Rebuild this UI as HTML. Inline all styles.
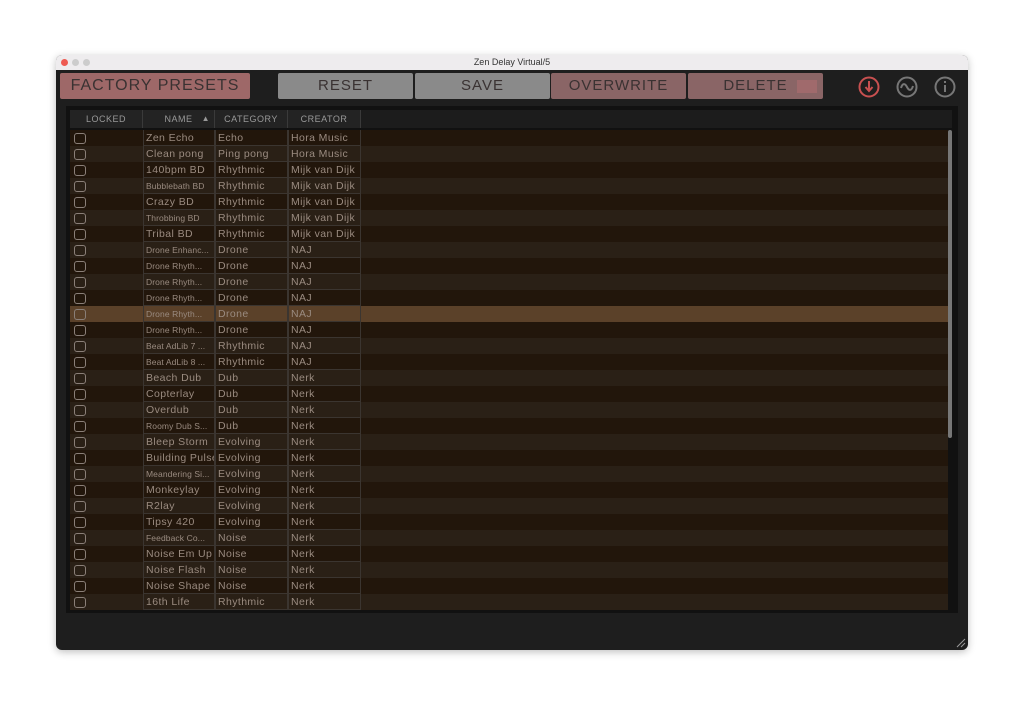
<!DOCTYPE html><html><head><style>
body{margin:0;width:1024px;height:706px;background:#fff;position:relative;overflow:hidden;font-family:"Liberation Sans",sans-serif}
.win{position:absolute;left:56px;top:55px;width:912px;height:595px;border-radius:6px;background:#1e1e1e;overflow:hidden;box-shadow:0 2px 8px rgba(0,0,0,.25)}
.tb{position:absolute;left:0;top:0;width:912px;height:15px;background:#eeecee;font-size:9px;color:#333;text-align:center;line-height:15px}
.dot{position:absolute;top:4px;width:7px;height:7px;border-radius:50%;background:#ccc}
.btn{position:absolute;top:18px;height:26px;line-height:26px;text-align:center;font-size:15px;letter-spacing:1px;color:#3a3232;border-radius:2px}
.panel{position:absolute;left:10px;top:51px;width:892px;height:507px;background:#111}
.hdr{position:absolute;top:4px;height:18px;line-height:18px;font-size:9px;color:#999;text-align:center;background:#232323;border-right:1px solid #3a3a3a;letter-spacing:.5px}
.row{position:absolute;left:4px;width:878px;height:16px}
.c{position:absolute;top:0;height:16px;line-height:16px;font-size:10.5px;color:#9a8b80;border:1px solid #3b3530;border-top:none;padding-left:2px;letter-spacing:.4px;white-space:nowrap;overflow:hidden;box-sizing:border-box}
.cb{position:absolute;left:4px;top:3px;width:10px;height:9px;border:1px solid #8a7f78;border-radius:3px}
</style></head><body>
<div class="win">
<div class="tb">Zen Delay Virtual/5</div>
<div class="dot" style="left:5px;background:#ee5a52"></div><div class="dot" style="left:16px"></div><div class="dot" style="left:27px"></div>
<div class="btn" style="left:4px;width:190px;background:#9e6868;font-size:16px">FACTORY PRESETS</div>
<div class="btn" style="left:222px;width:135px;background:#8a8a8a">RESET</div>
<div class="btn" style="left:359px;width:135px;background:#8a8a8a">SAVE</div>
<div class="btn" style="left:495px;width:135px;background:#8a6566">OVERWRITE</div>
<div class="btn" style="left:632px;width:135px;background:#8a6566">DELETE<span style="position:absolute;right:6px;top:7px;width:20px;height:13px;background:#a06a6c"></span></div>
<svg style="position:absolute;left:800px;top:20px" width="112" height="24" viewBox="0 0 112 24">
<circle cx="13" cy="12" r="9.5" fill="none" stroke="#c85050" stroke-width="2"/><path d="M13 6v9M9.5 12l3.5 4 3.5-4" stroke="#c85050" stroke-width="2" fill="none"/>
<circle cx="51" cy="12" r="9.5" fill="none" stroke="#777" stroke-width="2"/><path d="M45 13c1.5-5 4-5 6-1s4.5 4 6-1" stroke="#777" stroke-width="2" fill="none"/>
<circle cx="89" cy="12" r="9.5" fill="none" stroke="#777" stroke-width="2"/><path d="M89 10v7M89 6v2" stroke="#777" stroke-width="2"/>
</svg>
<div class="panel">
<div style="position:absolute;left:4px;top:4px;width:882px;height:18px;background:#1c1c1c"></div>
<div class="hdr" style="left:4px;width:72px">LOCKED</div>
<div class="hdr" style="left:77px;width:71px">NAME<span style="position:absolute;right:4px;font-size:8px">▲</span></div>
<div class="hdr" style="left:149px;width:72px">CATEGORY</div>
<div class="hdr" style="left:222px;width:72px">CREATOR</div>
<div id="rows"></div>
<div style="position:absolute;left:882px;top:24px;width:4px;height:308px;background:#777;border-radius:2px"></div>
</div>
<svg style="position:absolute;right:2px;bottom:2px" width="10" height="10"><path d="M1 9L9 1M5 9L9 5" stroke="#999"/></svg>
</div>
<script>
var d=[["Zen Echo","Echo","Hora Music"],["Clean pong","Ping pong","Hora Music"],["140bpm BD","Rhythmic","Mijk van Dijk"],["Bubblebath BD","Rhythmic","Mijk van Dijk",1],["Crazy BD","Rhythmic","Mijk van Dijk"],["Throbbing BD","Rhythmic","Mijk van Dijk",1],["Tribal BD","Rhythmic","Mijk van Dijk"],["Drone Enhanc...","Drone","NAJ",1],["Drone Rhyth...","Drone","NAJ",1],["Drone Rhyth...","Drone","NAJ",1],["Drone Rhyth...","Drone","NAJ",1],["Drone Rhyth...","Drone","NAJ",1],["Drone Rhyth...","Drone","NAJ",1],["Beat AdLib 7 ...","Rhythmic","NAJ",1],["Beat AdLib 8 ...","Rhythmic","NAJ",1],["Beach Dub","Dub","Nerk"],["Copterlay","Dub","Nerk"],["Overdub","Dub","Nerk"],["Roomy Dub S...","Dub","Nerk",1],["Bleep Storm","Evolving","Nerk"],["Building Pulse","Evolving","Nerk"],["Meandering Si...","Evolving","Nerk",1],["Monkeylay","Evolving","Nerk"],["R2lay","Evolving","Nerk"],["Tipsy 420","Evolving","Nerk"],["Feedback Co...","Noise","Nerk",1],["Noise Em Up","Noise","Nerk"],["Noise Flash","Noise","Nerk"],["Noise Shape","Noise","Nerk"],["16th Life","Rhythmic","Nerk"]];
var h="";d.forEach(function(r,i){var bg=i==11?"#5b4129":(i%2?"#2a2016":"#22160b");var fs=r[3]?"font-size:8.5px;letter-spacing:.1px":"";
h+='<div class="row" style="top:'+(24+i*16)+'px;background:'+bg+'"><div class="cb"></div><div class="c" style="left:73px;width:72px;'+fs+'">'+r[0]+'</div><div class="c" style="left:145px;width:73px">'+r[1]+'</div><div class="c" style="left:218px;width:73px">'+r[2]+'</div></div>';});
document.getElementById("rows").innerHTML=h;
</script>
</body></html>
